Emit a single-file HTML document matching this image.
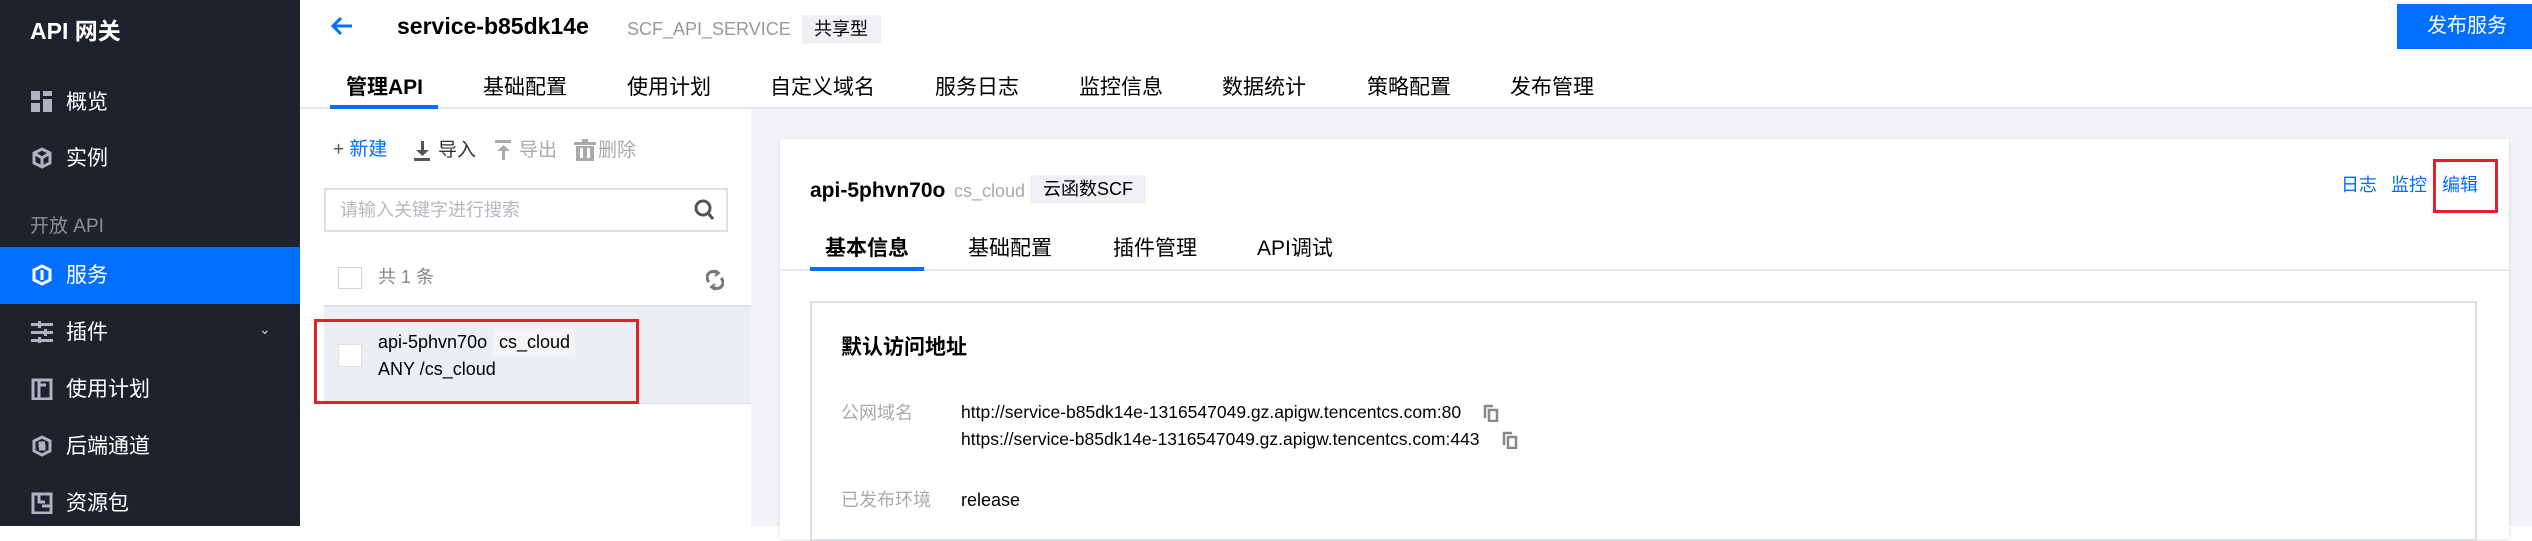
<!DOCTYPE html>
<html><head><meta charset="utf-8"><style>
*{margin:0;padding:0;box-sizing:border-box}
body{width:2532px;height:526px;overflow:hidden;position:relative;background:#fff;font-family:"Liberation Sans","Noto Sans CJK SC",sans-serif;color:#000}
.a{position:absolute;white-space:nowrap;line-height:1}
#side{position:absolute;left:0;top:0;width:300px;height:526px;background:#1e222d}
.si{position:absolute;left:66px;font-size:21px;color:#fff;line-height:1}
.ic{position:absolute;left:31px;width:22px;height:22px}
.tab{font-size:21px;color:#000;top:77px}
.gray{color:#888}
</style></head><body>
<div id="side">
 <div class="a" style="left:30px;top:20px;font-size:23px;font-weight:bold;color:#fff">API 网关</div>
 <svg class="ic" style="top:91px" viewBox="0 0 22 22" fill="#aeb3bf"><rect x="0" y="0" width="9" height="9"/><rect x="12" y="0" width="9" height="5"/><rect x="12" y="8" width="9" height="13"/><rect x="0" y="12" width="9" height="9"/></svg>
 <div class="si" style="top:92px">概览</div>
 <svg class="ic" style="top:147px" viewBox="0 0 22 22" fill="none" stroke="#aeb3bf" stroke-width="3"><path d="M11 2 L19 6 V16 L11 20 L3 16 V6Z M3 6 L11 11 L19 6 M11 11 V20"/></svg>
 <div class="si" style="top:148px">实例</div>
 <div class="si" style="top:217px;left:30px;color:#8a8f99;font-size:19px">开放 API</div>
 <div style="position:absolute;left:0;top:247px;width:300px;height:57px;background:#006eff"></div>
 <svg class="ic" style="top:264px" viewBox="0 0 22 22" fill="none" stroke="#fff" stroke-width="3"><path d="M11 2 L19 6 V16 L11 20 L3 16 V6Z"/><path d="M11 6 V16" /></svg>
 <div class="si" style="top:265px">服务</div>
 <svg class="ic" style="top:321px" viewBox="0 0 22 22" fill="#aeb3bf"><rect x="0" y="2" width="22" height="3"/><rect x="0" y="10" width="22" height="3"/><rect x="0" y="18" width="22" height="3"/><rect x="7" y="0" width="3" height="7"/><rect x="13" y="8" width="3" height="7"/><rect x="7" y="16" width="3" height="6"/></svg>
 <div class="si" style="top:322px">插件</div>
 <div class="a" style="left:259px;top:322px;color:#cfd3da;font-size:14px">&#8964;</div>
 <svg class="ic" style="top:378px" viewBox="0 0 22 22" fill="none" stroke="#aeb3bf" stroke-width="3"><rect x="2" y="2" width="18" height="19"/><path d="M8 2 V21 M8 7 H15"/></svg>
 <div class="si" style="top:379px">使用计划</div>
 <svg class="ic" style="top:435px" viewBox="0 0 22 22" fill="none" stroke="#aeb3bf" stroke-width="3"><path d="M11 2 L19 6 V16 L11 20 L3 16 V6Z"/><path d="M14 8 H9 V11 H13 V14 H8"/></svg>
 <div class="si" style="top:436px">后端通道</div>
 <svg class="ic" style="top:492px" viewBox="0 0 22 22" fill="none" stroke="#aeb3bf" stroke-width="3"><rect x="2" y="2" width="18" height="19"/><path d="M8 2 V10 H14 M11 14 H20"/></svg>
 <div class="si" style="top:493px">资源包</div>
</div>

<!-- header -->
<svg style="position:absolute;left:330px;top:16px" width="24" height="20" viewBox="0 0 24 20" fill="none" stroke="#006eff" stroke-width="3"><path d="M22 10 H3 M11 2 L3 10 L11 18"/></svg>
<div class="a" style="left:397px;top:15px;font-size:23px;font-weight:bold">service-b85dk14e</div>
<div class="a gray" style="left:627px;top:20px;font-size:18px;color:#999">SCF_API_SERVICE</div>
<div class="a" style="left:802px;top:15px;width:79px;height:29px;background:#f0f1f4;font-size:18px;padding:5px 0 0 12px">共享型</div>
<div class="a" style="left:2397px;top:4px;width:135px;height:45px;background:#006eff;color:#fff;font-size:20px;padding:12px 0 0 30px">发布服务</div>

<div class="a tab" style="left:346px;font-weight:bold">管理API</div>
<div class="a tab" style="left:483px">基础配置</div>
<div class="a tab" style="left:627px">使用计划</div>
<div class="a tab" style="left:770px">自定义域名</div>
<div class="a tab" style="left:935px">服务日志</div>
<div class="a tab" style="left:1079px">监控信息</div>
<div class="a tab" style="left:1222px">数据统计</div>
<div class="a tab" style="left:1367px">策略配置</div>
<div class="a tab" style="left:1510px">发布管理</div>
<div style="position:absolute;left:300px;top:107px;width:2232px;height:2px;background:#e6e8ec"></div>
<div style="position:absolute;left:330px;top:105px;width:108px;height:4px;background:#006eff"></div>

<!-- right gray area -->
<div style="position:absolute;left:751px;top:109px;width:1781px;height:417px;background:#f2f3f6"></div>

<!-- left panel -->
<div class="a" style="left:333px;top:140px;font-size:19px;color:#555">+ <span style="color:#006eff">新建</span></div>
<svg style="position:absolute;left:414px;top:141px" width="16" height="20" viewBox="0 0 16 20" fill="#555"><rect x="7" y="0" width="3" height="11"/><path d="M2 9 H15 L8.5 15Z"/><rect x="0" y="17" width="16" height="3"/></svg>
<div class="a" style="left:438px;top:141px;font-size:19px;color:#333">导入</div>
<svg style="position:absolute;left:495px;top:140px" width="16" height="20" viewBox="0 0 16 20" fill="#aaa"><rect x="0" y="0" width="16" height="3"/><path d="M2 11 H15 L8.5 5Z"/><rect x="7" y="9" width="3" height="11"/></svg>
<div class="a" style="left:519px;top:141px;font-size:19px;color:#aaa">导出</div>
<svg style="position:absolute;left:574px;top:139px" width="22" height="22" viewBox="0 0 22 22" fill="#aaa"><rect x="0" y="3" width="22" height="3"/><rect x="8" y="0" width="6" height="3"/><path d="M2 7 H20 V22 H2Z M6 9 V19 H9 V9Z M13 9 V19 H16 V9Z" fill-rule="evenodd"/></svg>
<div class="a" style="left:598px;top:141px;font-size:19px;color:#aaa">删除</div>

<div style="position:absolute;left:324px;top:188px;width:404px;height:44px;border:2px solid #dcdfe5;background:#fff"></div>
<div class="a" style="left:340px;top:201px;font-size:18px;color:#b5b8bf">请输入关键字进行搜索</div>
<svg style="position:absolute;left:694px;top:199px" width="20" height="22" viewBox="0 0 20 22" fill="none" stroke="#555" stroke-width="3"><circle cx="9" cy="9" r="7"/><path d="M14 14 L19 20"/></svg>

<div style="position:absolute;left:338px;top:267px;width:24px;height:22px;border:1px solid #cfd3da;background:#fff"></div>
<div class="a" style="left:378px;top:268px;font-size:18px;color:#888">共 1 条</div>
<svg style="position:absolute;left:706px;top:268px" width="18" height="24" viewBox="0 0 18 24" fill="none" stroke="#777" stroke-width="3"><path d="M3 14 A6 6 0 0 1 11 5 M15 10 A6 6 0 0 1 7 19"/><path d="M9 2 L13 5 L9 8 M9 16 L5 19 L9 22" stroke-width="2"/></svg>

<div style="position:absolute;left:324px;top:305px;width:427px;height:2px;background:#dcdfe5"></div>
<div style="position:absolute;left:324px;top:307px;width:427px;height:97px;background:#ebeef3"></div>
<div style="position:absolute;left:324px;top:403px;width:427px;height:1px;background:#dcdfe5"></div>
<div style="position:absolute;left:338px;top:344px;width:24px;height:23px;border:1px solid #dcdfe5;background:#fff"></div>
<div class="a" style="left:378px;top:333px;font-size:18px;color:#000">api-5phvn70o</div>
<div class="a" style="left:493px;top:329px;width:82px;height:27px;background:#f3f4f6;font-size:18px;padding:4px 0 0 6px">cs_cloud</div>
<div class="a" style="left:378px;top:360px;font-size:18px">ANY /cs_cloud</div>
<div style="position:absolute;left:314px;top:319px;width:325px;height:85px;border:3px solid #e0202a"></div>

<!-- card -->
<div style="position:absolute;left:780px;top:139px;width:1729px;height:400px;background:#fff;box-shadow:0 1px 4px rgba(0,0,0,.12)"></div>
<div class="a" style="left:810px;top:180px;font-size:21px;font-weight:bold">api-5phvn70o</div>
<div class="a" style="left:954px;top:182px;font-size:18px;color:#aaa">cs_cloud</div>
<div class="a" style="left:1030px;top:175px;width:116px;height:29px;background:#f0f1f4;font-size:18px;padding:5px 0 0 13px">云函数SCF</div>
<div class="a" style="left:2341px;top:176px;font-size:18px;color:#006eff">日志</div>
<div class="a" style="left:2391px;top:176px;font-size:18px;color:#006eff">监控</div>
<div class="a" style="left:2442px;top:176px;font-size:18px;color:#006eff">编辑</div>
<div style="position:absolute;left:2433px;top:159px;width:65px;height:54px;border:3px solid #e0202a"></div>

<div class="a" style="left:825px;top:238px;font-size:21px;font-weight:bold">基本信息</div>
<div class="a" style="left:968px;top:238px;font-size:21px">基础配置</div>
<div class="a" style="left:1113px;top:238px;font-size:21px">插件管理</div>
<div class="a" style="left:1257px;top:238px;font-size:21px">API调试</div>
<div style="position:absolute;left:780px;top:269px;width:1729px;height:2px;background:#e6e8ec"></div>
<div style="position:absolute;left:810px;top:267px;width:114px;height:4px;background:#006eff"></div>

<div style="position:absolute;left:810px;top:301px;width:1667px;height:240px;border:2px solid #dcdfe5"></div>
<div class="a" style="left:841px;top:337px;font-size:21px;font-weight:bold">默认访问地址</div>
<div class="a" style="left:841px;top:404px;font-size:18px;color:#aaa">公网域名</div>
<div class="a" style="left:961px;top:404px;font-size:17.5px">http://service-b85dk14e-1316547049.gz.apigw.tencentcs.com:80</div>
<div class="a" style="left:961px;top:431px;font-size:17.5px">https://service-b85dk14e-1316547049.gz.apigw.tencentcs.com:443</div>
<svg style="position:absolute;left:1483px;top:404px" width="16" height="18" viewBox="0 0 16 18" fill="none" stroke="#888" stroke-width="2.5"><path d="M2 14 V2 H10"/><rect x="6" y="6" width="8" height="11"/></svg>
<svg style="position:absolute;left:1502px;top:431px" width="16" height="18" viewBox="0 0 16 18" fill="none" stroke="#888" stroke-width="2.5"><path d="M2 14 V2 H10"/><rect x="6" y="6" width="8" height="11"/></svg>
<div class="a" style="left:841px;top:491px;font-size:18px;color:#aaa">已发布环境</div>
<div class="a" style="left:961px;top:491px;font-size:18px">release</div>
</body></html>
